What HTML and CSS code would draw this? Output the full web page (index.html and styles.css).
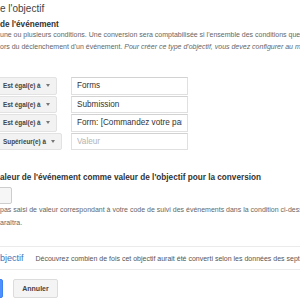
FILE: index.html
```html
<!DOCTYPE html>
<html>

	<head>
		<meta charset="UTF-8">
		<title>Objectif</title>
		<link rel="stylesheet" href="styles.css">
	</head>

	<body>
		<div class="page">
			<!--titre de l'étape-->
			<h1 class="title">e l'objectif</h1>
			<h2 class="sub">de l'événement</h2>
			<p class="desc">une ou plusieurs conditions. Une conversion sera comptabilisée si l'ensemble des conditions que v<br>ors du déclenchement d'un événement. <em>Pour créer ce type d'objectif, vous devez configurer au mo</em></p>

			<!--conditions-->
			<div class="conds">
				<div class="cond">
					<span class="sel">Est égal(e) à <i class="caret"></i></span>
					<input class="field" type="text" value="Forms">
				</div>
				<div class="cond">
					<span class="sel">Est égal(e) à <i class="caret"></i></span>
					<input class="field" type="text" value="Submission">
				</div>
				<div class="cond">
					<span class="sel">Est égal(e) à <i class="caret"></i></span>
					<input class="field" type="text" value="Form: [Commandez votre panier]">
				</div>
				<div class="cond">
					<span class="sel">Supérieur(e) à <i class="caret"></i></span>
					<input class="field" type="text" placeholder="Valeur">
				</div>
			</div>

			<h2 class="sub sub-val">aleur de l'événement comme valeur de l'objectif pour la conversion</h2>
			<div class="toggle"></div>
			<p class="desc desc-val">pas saisi de valeur correspondant à votre code de suivi des événements dans la condition ci-dess<br>araîtra.</p>

			<!--vérification-->
			<div class="verify">
				<a class="link" href="#">bjectif</a>
				<span class="verify-text">Découvrez combien de fois cet objectif aurait été converti selon les données des sept d</span>
			</div>

			<div class="actions">
				<a class="btn btn-blue" href="#"></a>
				<a class="btn" href="#">Annuler</a>
			</div>
		</div>
	</body>

</html>
```

FILE: styles.css
```css
* {
	margin: 0;
	padding: 0;
}

html,
body {
	width: 300px;
	height: 300px;
	overflow: hidden;
	background: #fff;
}

body {
	font-family: "Liberation Sans", Arial, sans-serif;
	color: #333;
}

.page {
	width: 300px;
}

.title {
	margin-top: 3px;
	font-size: 10px;
	line-height: 12px;
	font-weight: normal;
	color: #444;
	white-space: nowrap;
}

.sub {
	margin-top: 6px;
	font-size: 8.2px;
	line-height: 8px;
	font-weight: bold;
	color: #333;
	white-space: nowrap;
}

.desc {
	font-size: 7px;
	line-height: 12px;
	color: #666;
	white-space: nowrap;
}

/*conditions*/
.conds {
	margin: 24px 0 0 -6px;
	display: flex;
	flex-direction: column;
	gap: 1px;
}

.cond {
	display: grid;
	grid-template-columns: 77px 117px;
	height: 17.5px;
}

.sel {
	justify-self: start;
	display: flex;
	align-items: center;
	gap: 5px;
	height: 17.5px;
	box-sizing: border-box;
	padding: 0 6px 0 8px;
	background: #f2f2f2;
	border: 1px solid #e2e2e2;
	border-radius: 2px;
	font-size: 6.4px;
	font-weight: bold;
	color: #444;
	white-space: nowrap;
}

.caret {
	width: 0;
	height: 0;
	border-top: 3px solid #777;
	border-left: 2px solid transparent;
	border-right: 2px solid transparent;
}

.field {
	height: 17.5px;
	box-sizing: border-box;
	padding: 0 5px;
	border: 1px solid #e0e0e0;
	border-top-color: #d2d2d2;
	font-family: "Liberation Sans", Arial, sans-serif;
	font-size: 8.2px;
	color: #333;
	outline: none;
}

.field::placeholder {
	color: #b3b3b3;
}

.sub-val {
	margin-top: 24px;
}

.toggle {
	margin: 5px 0 0 -8px;
	width: 20px;
	height: 17px;
	box-sizing: border-box;
	background: #f6f6f6;
	border: 1px solid #cdcdcd;
	border-radius: 2px;
}

.desc-val {
	line-height: 12.5px;
}

/*vérification*/
.verify {
	margin-top: 17px;
	height: 24px;
	box-sizing: border-box;
	display: flex;
	align-items: center;
	gap: 12px;
	border-top: 1px solid #ebebeb;
	border-bottom: 1px solid #ebebeb;
	white-space: nowrap;
}

.link {
	font-size: 9px;
	color: #3f72b8;
	text-decoration: none;
}

.verify-text {
	font-size: 7px;
	color: #555;
}

.actions {
	margin-top: 9px;
	display: flex;
	gap: 10px;
}

.btn {
	display: flex;
	align-items: center;
	justify-content: center;
	width: 45px;
	height: 18.5px;
	box-sizing: border-box;
	background: #f4f4f4;
	border: 1px solid #dcdcdc;
	border-radius: 2px;
	font-size: 7px;
	font-weight: bold;
	color: #444;
	text-decoration: none;
}

.btn-blue {
	width: 33px;
	margin-left: -30px;
	background: #4d90fe;
	border-color: #3d82f0;
}
```
